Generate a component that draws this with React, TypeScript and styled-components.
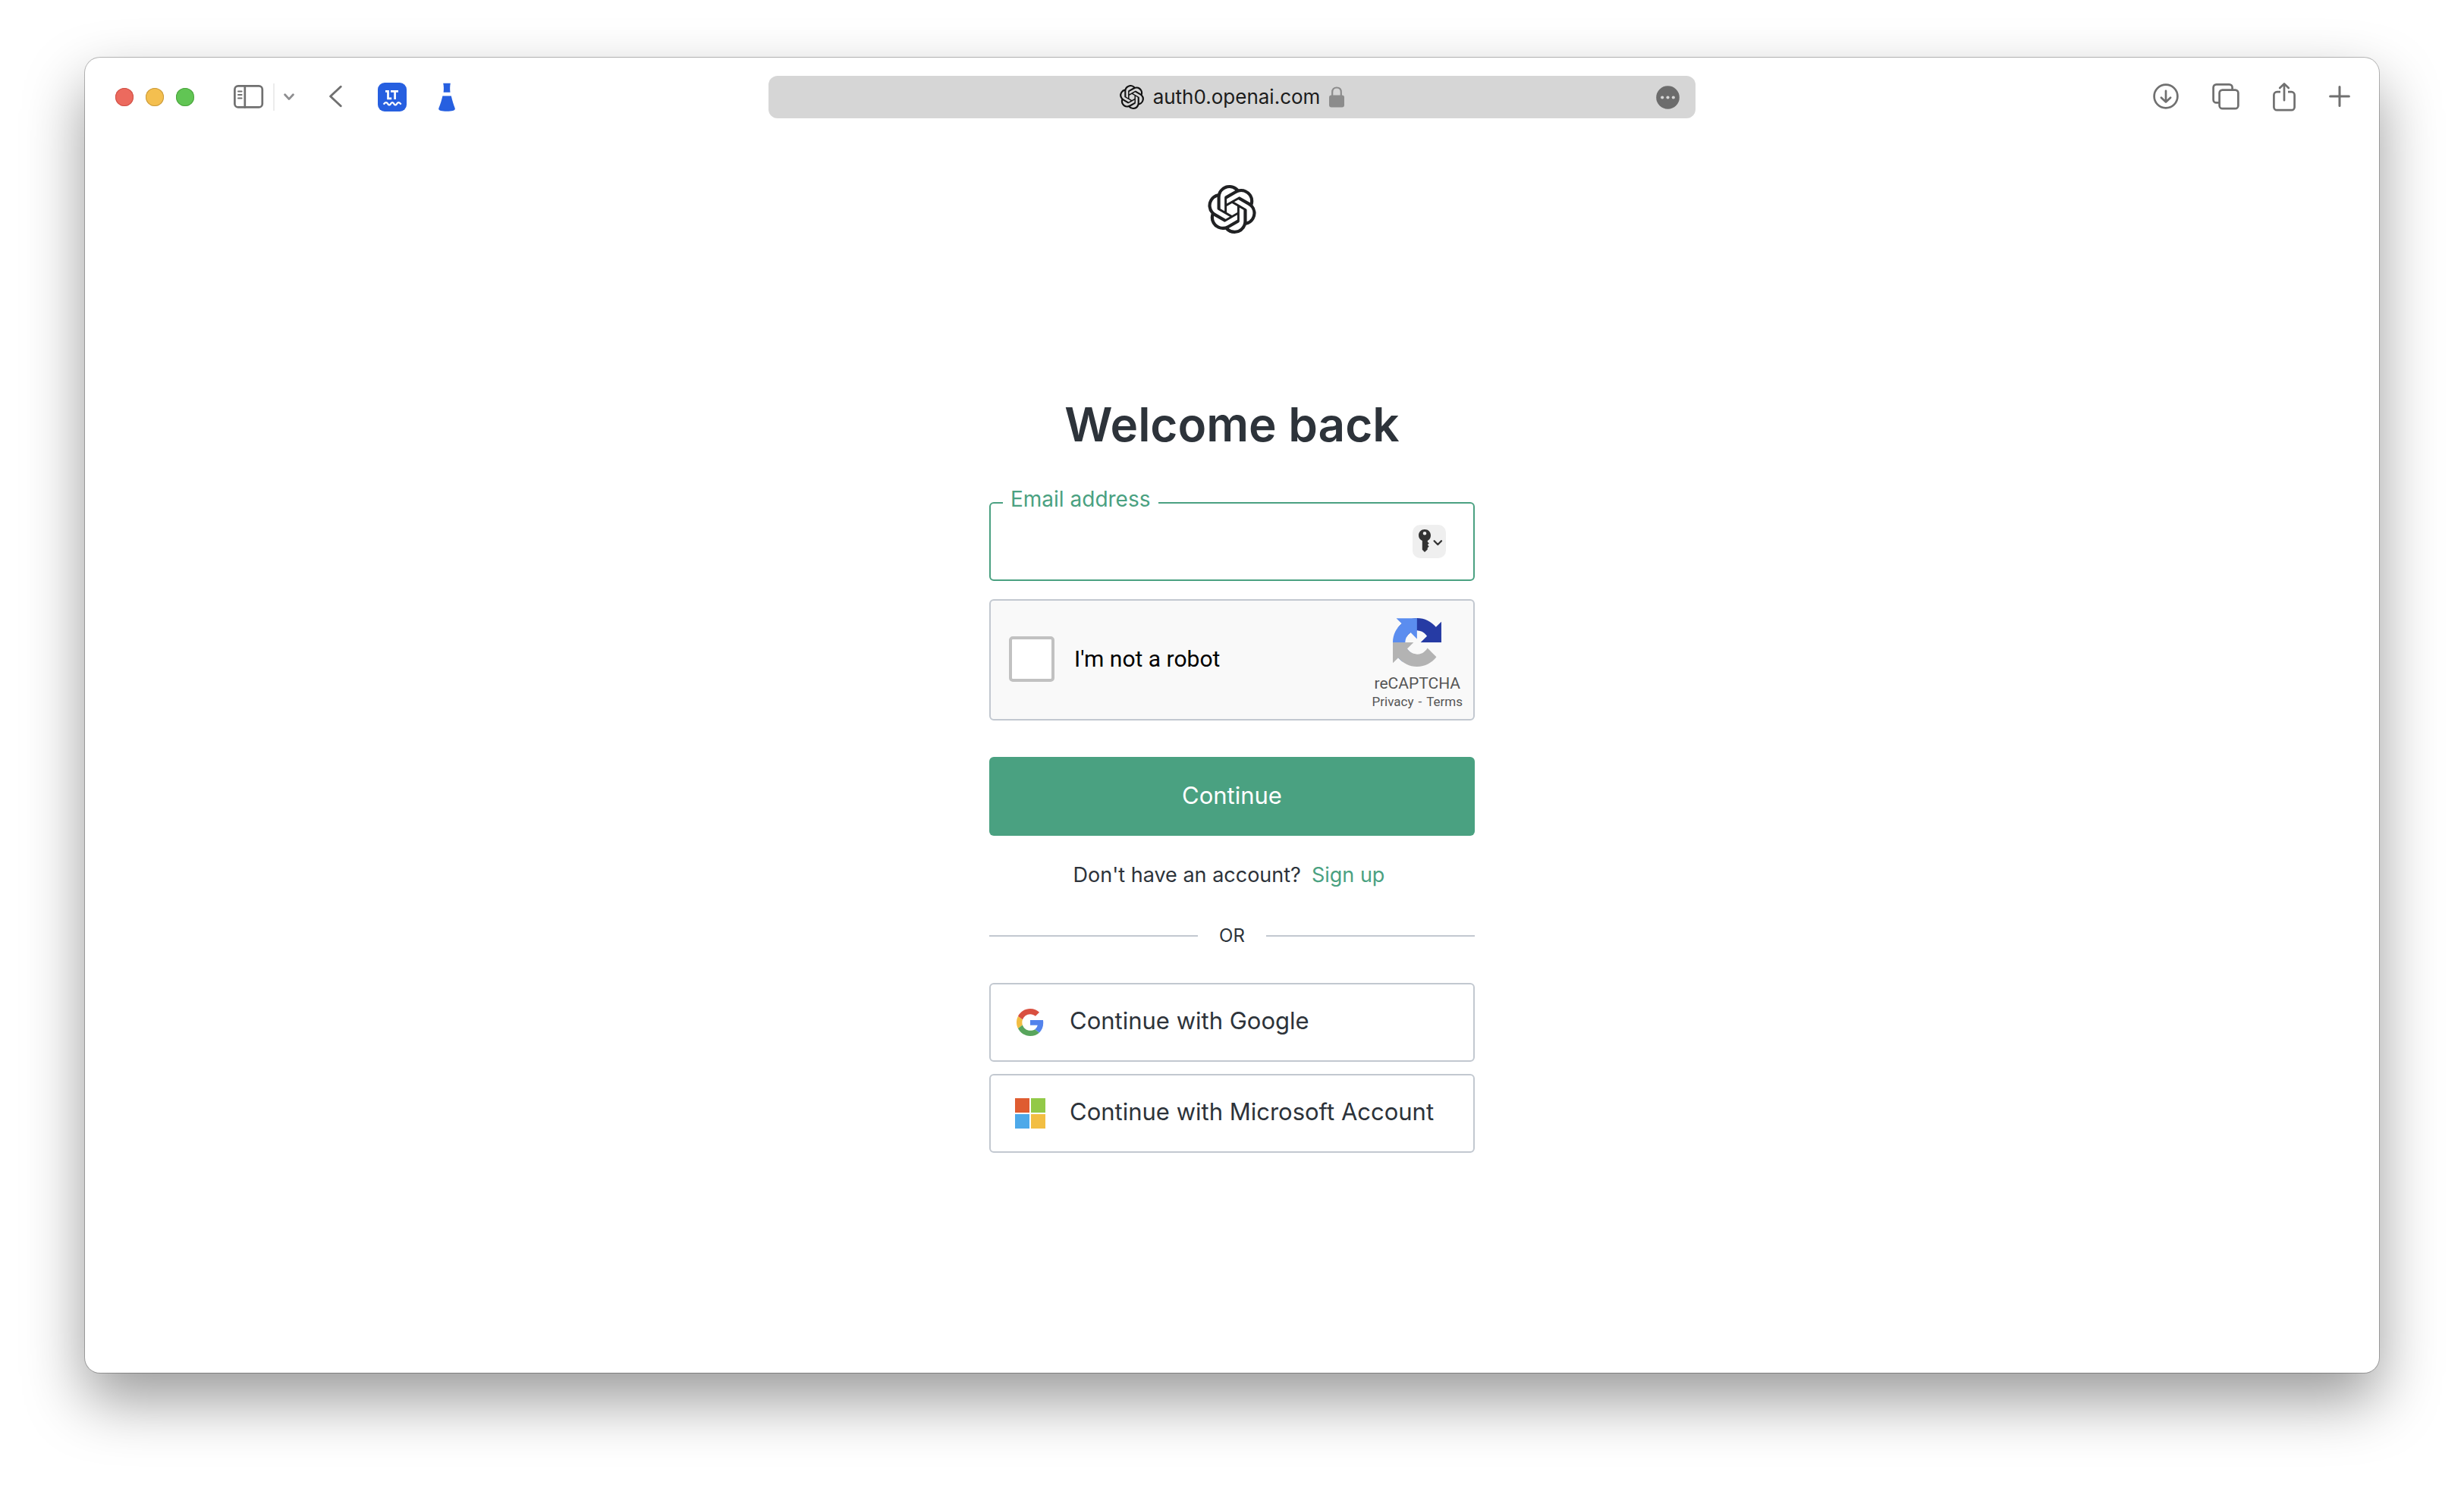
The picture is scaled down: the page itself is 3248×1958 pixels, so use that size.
import React from "react";
import styled, { createGlobalStyle } from "styled-components";
import { SiOpenai } from "react-icons/si";

const color = {
  ink: "#2d333a",
  green: "#4aa181",
  line: "#c2c8d0",
  chrome: "#707070",
  blue: "#265fe0",
};

const GlobalStyle = createGlobalStyle`
  *, *::before, *::after { box-sizing: border-box; }
  body { margin: 0; background: #fff; color: ${color.ink}; font-family: Inter, "Liberation Sans", sans-serif; }
  button { font: inherit; color: inherit; border: 0; padding: 0; background: none; cursor: pointer; }
  svg { display: block; flex: none; }
  a { text-decoration: none; }
`;

const Desktop = styled.div`
  min-height: 100vh;
  padding: 76px 112px 148px;
  display: flex;
`;

const BrowserWindow = styled.div`
  flex: 1;
  min-width: 0;
  display: flex;
  flex-direction: column;
  background: #fff;
  border-radius: 20px;
  box-shadow: 0 0 0 1px rgba(0, 0, 0, 0.26), 0 36px 80px rgba(0, 0, 0, 0.4);
`;

const Toolbar = styled.header`
  height: 104px;
  padding: 0 38px;
  display: grid;
  grid-template-columns: 1fr minmax(0, 1222px) 1fr;
  align-items: center;
  color: ${color.chrome};
`;

const ToolGroup = styled.div<{ $gap: number; $end?: boolean }>`
  display: flex;
  align-items: center;
  justify-content: ${(p) => (p.$end ? "flex-end" : "flex-start")};
  gap: ${(p) => p.$gap}px;
`;

const Lights = styled.div`
  display: flex;
  gap: 16px;
  margin: 0 6px 0 2px;
`;

const Light = styled.button<{ $fill: string; $edge: string }>`
  width: 24px;
  height: 24px;
  border-radius: 50%;
  background: ${(p) => p.$fill};
  box-shadow: inset 0 0 0 1px ${(p) => p.$edge};
`;

const ToolDivider = styled.span`
  width: 2px;
  height: 36px;
  background: #ececec;
`;

const AddressBar = styled.div`
  height: 56px;
  padding: 0 20px;
  border-radius: 12px;
  background: #d6d6d6;
  display: grid;
  grid-template-columns: 32px 1fr 32px;
  align-items: center;
`;

const Address = styled.div`
  grid-column: 2;
  display: flex;
  align-items: center;
  justify-content: center;
  gap: 12px;
  font-size: 26px;
  line-height: 32px;
  color: #1c1c1c;
`;

const Page = styled.main`
  flex: 1;
  display: flex;
  flex-direction: column;
  align-items: center;
  padding: 64px 24px;
`;

const Panel = styled.form`
  width: 100%;
  max-width: 640px;
  margin-top: 212px;
  display: flex;
  flex-direction: column;
`;

const Title = styled.h1`
  margin: 0 0 62px;
  font-size: 62px;
  line-height: 80px;
  font-weight: 600;
  text-align: center;
`;

const Field = styled.div`
  position: relative;
  height: 104px;
  border: 2px solid ${color.green};
  border-radius: 6px;
  padding: 0 36px 0 26px;
  display: flex;
  align-items: center;
`;

const FieldLabel = styled.label`
  position: absolute;
  left: 16px;
  top: -22px;
  padding: 0 10px;
  background: #fff;
  color: ${color.green};
  font-size: 28px;
  line-height: 32px;
`;

const FieldInput = styled.input`
  flex: 1;
  min-width: 0;
  height: 72px;
  border: 0;
  outline: 0;
  background: transparent;
  color: ${color.ink};
  font: inherit;
  font-size: 31px;
`;

const KeyButton = styled.button`
  width: 44px;
  height: 44px;
  border-radius: 10px;
  background: #efefef;
  color: #333;
`;

const Captcha = styled.div`
  margin-top: 24px;
  height: 160px;
  border: 2px solid ${color.line};
  border-radius: 6px;
  background: #f9f9f9;
  padding: 0 14px 0 24px;
  display: flex;
  align-items: center;
  justify-content: space-between;
  font-family: Roboto, "Liberation Sans", sans-serif;
`;

const RobotLabel = styled.label`
  display: flex;
  align-items: center;
  gap: 26px;
  padding-bottom: 2px;
  font-size: 30px;
  line-height: 36px;
  color: #000;
`;

const RobotCheck = styled.input`
  appearance: none;
  width: 60px;
  height: 60px;
  margin: 0;
  border: 4px solid #c1c1c1;
  border-radius: 5px;
  background: #fff;
`;

const CaptchaBrand = styled.div`
  display: flex;
  flex-direction: column;
  align-items: center;
  padding-top: 10px;
  color: #555;
`;

const BrandName = styled.span`
  margin-top: 8px;
  font-size: 21px;
  line-height: 28px;
`;

const BrandLinks = styled.span`
  display: flex;
  gap: 6px;
  font-size: 17px;
  line-height: 20px;
  a { color: inherit; }
`;

const Submit = styled.button`
  margin-top: 48px;
  height: 104px;
  padding-bottom: 4px;
  border-radius: 6px;
  background: ${color.green};
  color: #fff;
  font-size: 31px;
`;

const SignUp = styled.p`
  margin: 32px 8px 0 0;
  display: flex;
  justify-content: center;
  gap: 14px;
  font-size: 27px;
  line-height: 40px;
  a { color: ${color.green}; }
`;

const Or = styled.div`
  margin: 44px 0 46px;
  display: flex;
  align-items: center;
  gap: 28px;
  font-size: 24px;
  line-height: 32px;
  &::before, &::after {
    content: "";
    flex: 1;
    height: 2px;
    background: ${color.line};
  }
`;

const Providers = styled.div`
  display: flex;
  flex-direction: column;
  gap: 16px;
`;

const Provider = styled.button`
  height: 104px;
  padding: 0 32px;
  border: 2px solid ${color.line};
  border-radius: 6px;
  display: flex;
  align-items: center;
  gap: 32px;
  font-size: 31px;
  line-height: 40px;
  text-align: left;
`;

const ProviderIcon = styled.span`
  width: 40px;
  display: flex;
  justify-content: center;
`;

const ProviderName = styled.span`
  padding-bottom: 4px;
`;

const stroke = {
  fill: "none",
  stroke: "currentColor",
  strokeLinecap: "round" as const,
  strokeLinejoin: "round" as const,
};

const SidebarIcon = () => (
  <svg width="40" height="32" viewBox="0 0 40 32" {...stroke} strokeWidth="2.7">
    <rect x="1.4" y="1.4" width="36.4" height="28" rx="4.500" />
    <path d="M14.800 1.400v28" />
    <path d="M6 8.600h4.600M6 13h4.600M6 17.400h4.600" strokeWidth="2" />
  </svg>
);

const MenuChevron = () => (
  <svg width="14" height="10" viewBox="0 0 14 10" {...stroke} stroke="#8e8e90" strokeWidth="2.800">
    <path d="M1.600 1.800 7 7.600l5.400-5.800" />
  </svg>
);

const BackIcon = () => (
  <svg width="18" height="32" viewBox="0 0 18 32" {...stroke} strokeWidth="2.900">
    <path d="M15.200 2.200 1.600 15l13.600 12.800" />
  </svg>
);

const LanguageToolIcon = () => (
  <svg width="38" height="38" viewBox="0 0 38 38" fill="none" stroke="#fff" strokeWidth="2.700">
    <rect width="38" height="38" rx="9" fill={color.blue} stroke="none" />
    <path d="M10 11.300h3.500v9.500h4.700M17 11.300h10M22.600 11.300v10.800" />
    <path d="M7.700 28.600c2.200-3.600 4.400-3.200 6 0 .8 1.100 2 1.100 2.800 0 1.800-3.200 3.500-3.200 5.300 0 .8 1.100 2 1.100 2.800 0 1.700-3.200 3.600-3.600 6 0" strokeWidth="2.300" />
  </svg>
);

const FlaskIcon = () => (
  <svg width="22" height="38" viewBox="0 0 22 38" fill={color.blue}>
    <path d="M6.200.7h9.600c-.8 4-.8 8-.3 12H6.600c.5-4 .5-8-.4-12z" />
    <path d="M5.400 17.600h11.400c1.300 5.900 3 11.400 5 16.300.3 2.800-3.600 3.800-10.800 3.800S-.1 36.700.2 33.900c2.200-4.900 3.900-10.400 5.200-16.300z" />
  </svg>
);

const LockIcon = () => (
  <svg width="20" height="28" viewBox="0 0 20 28">
    <path d="M4.200 13V7.600C4.200 3.600 6.500 1.500 10 1.500s5.800 2.100 5.800 6.100V13" fill="none" stroke="#8c8c8c" strokeWidth="2.200" />
    <rect y="11.500" width="20" height="16" rx="3" fill="#8c8c8c" />
  </svg>
);

const MoreIcon = () => (
  <svg width="31" height="31" viewBox="0 0 31 31">
    <circle cx="15.500" cy="15.500" r="15.300" fill="#6c6c6c" />
    <g fill="#d6d6d6">
      <circle cx="8.200" cy="15.500" r="2.100" />
      <circle cx="15.500" cy="15.500" r="2.100" />
      <circle cx="22.800" cy="15.500" r="2.100" />
    </g>
  </svg>
);

const DownloadIcon = () => (
  <svg width="34" height="36" viewBox="0 0 34 36" {...stroke} strokeWidth="2.700">
    <circle cx="17" cy="17" r="15.400" />
    <path d="M17 9.800v14.400M10.900 18.700l6.100 5.700 6.100-5.700" />
  </svg>
);

const TabsIcon = () => (
  <svg width="36" height="36" viewBox="0 0 36 36" {...stroke} strokeWidth="2.700">
    <path d="M8.400 25.400H5.600a4 4 0 0 1-4-4V5.400a4 4 0 0 1 4-4h17a4 4 0 0 1 4 4v2.400" />
    <rect x="9.600" y="8.600" width="24.800" height="24.600" rx="4" />
  </svg>
);

const ShareIcon = () => (
  <svg width="30" height="40" viewBox="0 0 30 40" {...stroke} strokeWidth="2.700">
    <path d="M10 13.200H5.400a4 4 0 0 0-4 4v16a4 4 0 0 0 4 4h19.200a4 4 0 0 0 4-4v-16a4 4 0 0 0-4-4H20" strokeLinecap="butt" />
    <path d="M15 24.200V2.600M9.200 8 15 2.400 20.800 8" />
  </svg>
);

const PlusIcon = () => (
  <svg width="28" height="30" viewBox="0 0 28 30" {...stroke} strokeWidth="3">
    <path d="M14 1.600v25M1.600 14.100h24.800" />
  </svg>
);

const KeyIcon = () => (
  <svg width="44" height="44" viewBox="0 0 44 44">
    <path
      fillRule="evenodd"
      fill="currentColor"
      d="M16 6c4.600 0 8 3.500 8 8 0 3.100-1.600 5.700-4.200 7.100v1.300l2 1.900-2 2 1.800 2.200-1.900 1.900v2.200L16 36l-3.200-3.200V21.100C9.900 19.700 8 17.100 8 14c0-4.500 3.400-8 8-8zm0 3a2.300 2.300 0 1 0 0 4.600 2.300 2.300 0 0 0 0-4.600z"
    />
    <path d="M28.600 21.200l4.700 4.800 4.700-4.800" {...stroke} strokeWidth="2.300" />
  </svg>
);

const RecaptchaLogo = () => (
  <svg width="64" height="64" viewBox="0 0 64 64">
    <path fill="#263ba4" d="M64 31.955l-.033-1.370V4.687l-7.160 7.160C50.948 4.674 42.033.093 32.050.093c-10.400 0-19.622 4.960-25.458 12.640l11.736 11.860a15.550 15.550 0 0 1 4.754-5.334c2.050-1.600 4.952-2.906 8.968-2.906.485 0 .860.057 1.135.163 4.976.393 9.288 3.140 11.828 7.124l-8.307 8.307L64 31.953" />
    <path fill="#5b8def" d="M31.862.094l-1.370.033H4.594l7.160 7.160C4.580 13.147 0 22.060 0 32.046c0 10.400 4.960 19.622 12.640 25.458L24.500 45.768a15.550 15.550 0 0 1-5.334-4.754c-1.600-2.050-2.906-4.952-2.906-8.968 0-.485.057-.860.163-1.135.393-4.976 3.140-9.288 7.124-11.828l8.307 8.307L31.860.095" />
    <path fill="#b3b3b3" d="M.001 32.045l.033 1.370v25.898l7.160-7.160c5.860 7.173 14.774 11.754 24.760 11.754 10.400 0 19.622-4.960 25.458-12.640l-11.736-11.860a15.550 15.550 0 0 1-4.754 5.334c-2.050 1.600-4.952 2.906-8.968 2.906-.485 0-.860-.057-1.135-.163-4.976-.393-9.288-3.140-11.828-7.124l8.307-8.307c-10.522.040-22.400.066-27.295-.005" />
  </svg>
);

const GoogleLogo = () => (
  <svg width="36" height="36" viewBox="0 0 48 48">
    <path fill="#d95040" d="M24 9.500c3.540 0 6.710 1.220 9.210 3.600l6.850-6.850C35.900 2.380 30.470 0 24 0 14.620 0 6.510 5.380 2.560 13.220l7.980 6.190C12.430 13.720 17.740 9.500 24 9.500z" />
    <path fill="#5383ec" d="M46.980 24.550c0-1.570-.150-3.090-.380-4.550H24v9.020h12.940c-.580 2.960-2.260 5.480-4.780 7.180l7.730 6c4.510-4.180 7.090-10.360 7.090-17.650z" />
    <path fill="#f2bd42" d="M10.530 28.590c-.480-1.450-.760-2.990-.760-4.590s.270-3.140.760-4.590l-7.980-6.190C.920 16.460 0 20.120 0 24c0 3.880.920 7.540 2.560 10.780l7.970-6.190z" />
    <path fill="#58a55c" d="M24 48c6.480 0 11.930-2.130 15.890-5.810l-7.730-6c-2.150 1.450-4.920 2.300-8.160 2.300-6.260 0-11.570-4.220-13.470-9.910l-7.980 6.190C6.510 42.620 14.620 48 24 48z" />
  </svg>
);

const MicrosoftLogo = () => (
  <svg width="40" height="40" viewBox="0 0 40 40">
    <path fill="#df5c31" d="M0 0h19v19H0z" />
    <path fill="#92c948" d="M21 0h19v19H21z" />
    <path fill="#4da9e9" d="M0 21h19v19H0z" />
    <path fill="#f2be42" d="M21 21h19v19H21z" />
  </svg>
);

const lights = [
  { name: "Close", fill: "#ec6a5e", edge: "#cf5046" },
  { name: "Minimise", fill: "#f4bf4f", edge: "#c99a3c" },
  { name: "Zoom", fill: "#61c554", edge: "#4ca33e" },
];

const providers = [
  { name: "Google", Logo: GoogleLogo },
  { name: "Microsoft Account", Logo: MicrosoftLogo },
];

export default function App() {
  return (
    <>
      <GlobalStyle />
      <Desktop>
        <BrowserWindow>
          <Toolbar>
            <ToolGroup $gap={46}>
              <Lights>
                {lights.map((l) => (
                  <Light key={l.name} type="button" aria-label={l.name} $fill={l.fill} $edge={l.edge} />
                ))}
              </Lights>
              <ToolGroup $gap={12}>
                <button type="button" aria-label="Show sidebar"><SidebarIcon /></button>
                <ToolDivider />
                <button type="button" aria-label="Tab groups"><MenuChevron /></button>
              </ToolGroup>
              <button type="button" aria-label="Back"><BackIcon /></button>
              <ToolGroup $gap={42}>
                <button type="button" aria-label="LanguageTool"><LanguageToolIcon /></button>
                <button type="button" aria-label="Experiments"><FlaskIcon /></button>
              </ToolGroup>
            </ToolGroup>
            <AddressBar>
              <Address>
                <SiOpenai size={32} color="#111" />
                <span>auth0.openai.com</span>
                <LockIcon />
              </Address>
              <button type="button" aria-label="Page options"><MoreIcon /></button>
            </AddressBar>
            <ToolGroup $gap={44} $end>
              <button type="button" aria-label="Downloads"><DownloadIcon /></button>
              <button type="button" aria-label="Tab overview"><TabsIcon /></button>
              <button type="button" aria-label="Share"><ShareIcon /></button>
              <button type="button" aria-label="New tab"><PlusIcon /></button>
            </ToolGroup>
          </Toolbar>
          <Page>
            <SiOpenai size={64} color="#202123" />
            <Panel onSubmit={(e) => e.preventDefault()}>
              <Title>Welcome back</Title>
              <Field>
                <FieldLabel htmlFor="email">Email address</FieldLabel>
                <FieldInput id="email" type="email" />
                <KeyButton type="button" aria-label="Fill password"><KeyIcon /></KeyButton>
              </Field>
              <Captcha>
                <RobotLabel htmlFor="robot">
                  <RobotCheck id="robot" type="checkbox" />
                  I'm not a robot
                </RobotLabel>
                <CaptchaBrand>
                  <RecaptchaLogo />
                  <BrandName>reCAPTCHA</BrandName>
                  <BrandLinks>
                    <a href="#privacy">Privacy</a>
                    <span>-</span>
                    <a href="#terms">Terms</a>
                  </BrandLinks>
                </CaptchaBrand>
              </Captcha>
              <Submit type="submit">Continue</Submit>
              <SignUp>
                <span>Don't have an account?</span>
                <a href="#signup">Sign up</a>
              </SignUp>
              <Or>OR</Or>
              <Providers>
                {providers.map(({ name, Logo }) => (
                  <Provider key={name} type="button">
                    <ProviderIcon><Logo /></ProviderIcon>
                    <ProviderName>Continue with {name}</ProviderName>
                  </Provider>
                ))}
              </Providers>
            </Panel>
          </Page>
        </BrowserWindow>
      </Desktop>
    </>
  );
}
